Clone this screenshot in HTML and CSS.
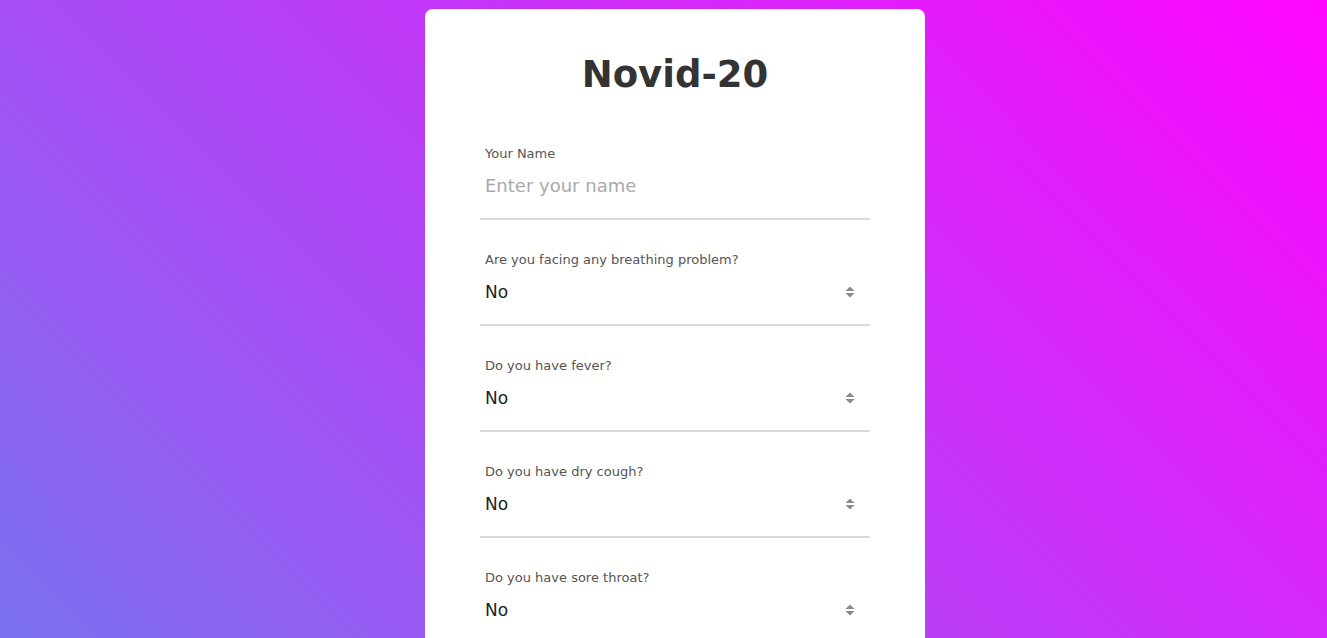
FILE: index.html
```html
<!DOCTYPE html>
<html lang="en">
<head>
<meta charset="utf-8">
<title>Novid-20</title>
<link rel="stylesheet" href="styles.css">
</head>
<body>
<main class="card">
  <h1 class="title">Novid-20</h1>
  <form class="form">
    <div class="field">
      <label class="label" for="name">Your Name</label>
      <div class="control">
        <input class="input" id="name" type="text" placeholder="Enter your name">
      </div>
    </div>
    <div class="field">
      <label class="label" for="q1">Are you facing any breathing problem?</label>
      <div class="control">
        <select class="select" id="q1"><option>No</option><option>Yes</option></select>
        <svg class="arrows" width="10" height="12" viewBox="0 0 10 12"><path d="M5 0.5 L9.5 5 L0.5 5 Z M0.5 7 L9.5 7 L5 11.5 Z" fill="#8a8a8a"/></svg>
      </div>
    </div>
    <div class="field">
      <label class="label" for="q2">Do you have fever?</label>
      <div class="control">
        <select class="select" id="q2"><option>No</option><option>Yes</option></select>
        <svg class="arrows" width="10" height="12" viewBox="0 0 10 12"><path d="M5 0.5 L9.5 5 L0.5 5 Z M0.5 7 L9.5 7 L5 11.5 Z" fill="#8a8a8a"/></svg>
      </div>
    </div>
    <div class="field">
      <label class="label" for="q3">Do you have dry cough?</label>
      <div class="control">
        <select class="select" id="q3"><option>No</option><option>Yes</option></select>
        <svg class="arrows" width="10" height="12" viewBox="0 0 10 12"><path d="M5 0.5 L9.5 5 L0.5 5 Z M0.5 7 L9.5 7 L5 11.5 Z" fill="#8a8a8a"/></svg>
      </div>
    </div>
    <div class="field">
      <label class="label" for="q4">Do you have sore throat?</label>
      <div class="control">
        <select class="select" id="q4"><option>No</option><option>Yes</option></select>
        <svg class="arrows" width="10" height="12" viewBox="0 0 10 12"><path d="M5 0.5 L9.5 5 L0.5 5 Z M0.5 7 L9.5 7 L5 11.5 Z" fill="#8a8a8a"/></svg>
      </div>
    </div>
  </form>
</main>
</body>
</html>
```
FILE: styles.css
```css
html, body {
  margin: 0;
  height: 100%;
}
body {
  height: 100vh;
  overflow: hidden;
  background: linear-gradient(45deg, #7a72ef 0%, #ff05ff 100%);
  font-family: "DejaVu Sans", "Open Sans", sans-serif;
}
.card {
  box-sizing: border-box;
  width: 500px;
  margin: 9px 0 0 425px;
  padding: 41px 55px 40px;
  background: #fff;
  border-radius: 8px;
}
.title {
  margin: 0 0 44px;
  height: 50px;
  line-height: 50px;
  text-align: center;
  font-size: 37px;
  font-weight: 700;
  color: #333;
}
.form {
  display: flex;
  flex-direction: column;
  gap: 30px;
}
.field {
  display: flex;
  flex-direction: column;
}
.label {
  padding-left: 5px;
  height: 20px;
  line-height: 20px;
  font-size: 13px;
  color: #555;
}
.control {
  position: relative;
  border-bottom: 2px solid #d9d9d9;
  padding: 7px 0 17px;
}
.input, .select {
  display: block;
  box-sizing: border-box;
  width: 100%;
  height: 30px;
  line-height: 30px;
  margin: 0;
  padding: 0 5px;
  border: 0;
  outline: none;
  background: transparent;
  font-family: inherit;
  font-size: 17px;
  color: #222;
  appearance: none;
  -webkit-appearance: none;
}
.input {
  font-size: 18px;
}
.input::placeholder {
  color: #aaa;
}
.arrows {
  position: absolute;
  right: 15px;
  top: 16px;
  pointer-events: none;
}
```
